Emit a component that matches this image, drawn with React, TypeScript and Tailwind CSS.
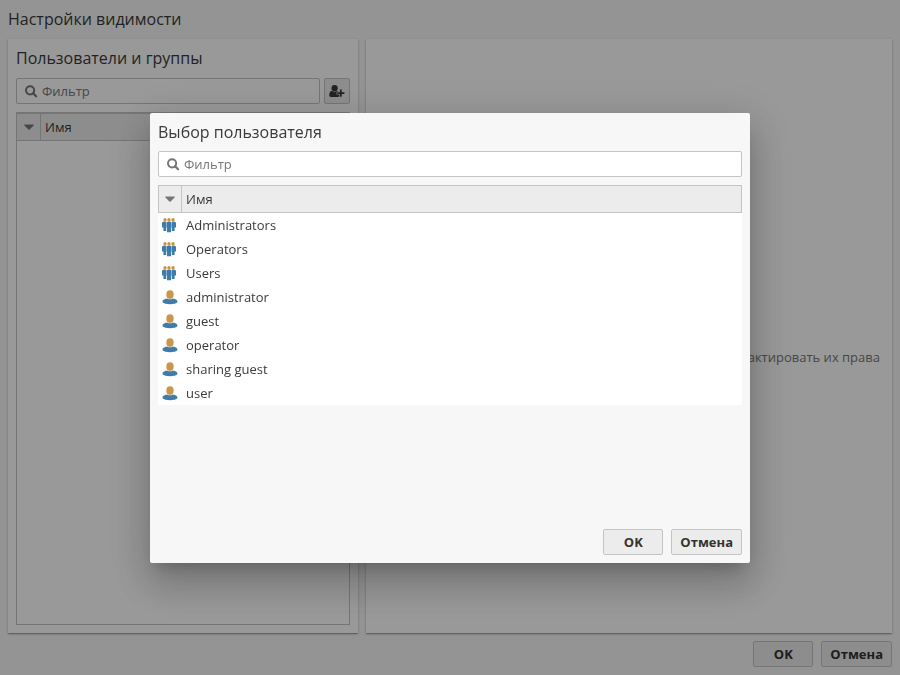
import React from "react";

function SearchIcon() {
  return (
    <svg width="13" height="13" viewBox="0 0 13 13" fill="none" stroke="currentColor" aria-hidden="true">
      <circle cx="5.1" cy="5.3" r="4.1" strokeWidth="2" />
      <path d="M8.2 8.4 L11.1 11.3" strokeWidth="2.2" strokeLinecap="round" />
    </svg>
  );
}

function CaretIcon() {
  return (
    <svg width="10" height="6" viewBox="0 0 10 6" fill="currentColor" aria-hidden="true">
      <path d="M0.9 0.6H9.1C9.8 0.6 10 1.2 9.6 1.6L5.6 5.6C5.3 5.9 4.7 5.9 4.4 5.6L0.4 1.6C0 1.2 0.2 0.6 0.9 0.6Z" />
    </svg>
  );
}

function UserPlusIcon() {
  return (
    <svg width="16" height="13" viewBox="0 0 16 13" fill="currentColor" aria-hidden="true">
      <circle cx="5.6" cy="3.2" r="3.1" />
      <path d="M2.9 5.7C1 5.9 0.3 7.9 0.3 9.9C0.3 11.2 1.1 12 2.4 12H8.9C9.5 12 10 11.8 10.3 11.5V9.4H7.6V6.8H9.3C9 6.2 8.7 5.9 8.2 5.7C6.7 7.1 4.4 7.1 2.9 5.7Z" />
      <path d="M10.9 4.6H12.7V7.2H15.4V9H12.7V11.7H10.9V9H8.3V7.2H10.9Z" />
    </svg>
  );
}

function GroupIcon() {
  return (
    <svg width="16" height="16" viewBox="0 0 16 16" aria-hidden="true">
      <g fill="#c9964b">
        <ellipse cx="3" cy="2.9" rx="1.7" ry="1.8" />
        <ellipse cx="7" cy="2.9" rx="1.7" ry="1.8" />
        <ellipse cx="11" cy="2.9" rx="1.7" ry="1.8" />
      </g>
      <g fill="#3d7cab">
        <path d="M1 4.8H4.2V14H1.4V10.4H0V5.8Z" />
        <path d="M9.8 4.8H13L14 5.8V10.4H12.6V14H9.8Z" />
        <path d="M5.4 4.8H8.6L9.5 5.8V10.8H9V15.3H5V10.8H4.5V5.8Z" />
      </g>
    </svg>
  );
}

function UserIcon() {
  return (
    <svg width="16" height="16" viewBox="0 0 16 16" aria-hidden="true">
      <path fill="#3d7cab" d="M0.5 13.2C0.5 10.4 3 9.8 5.2 9.4C6.7 10.6 9.3 10.6 10.8 9.4C13 9.8 15.5 10.4 15.5 13.2C13.5 15.8 2.5 15.8 0.5 13.2Z" />
      <ellipse fill="#c9964b" cx="8" cy="5.6" rx="3.7" ry="4.3" />
    </svg>
  );
}

function FilterField({ label }: { label: string }) {
  return (
    <label className="flex h-[26px] min-w-0 flex-1 items-center gap-1 rounded-xs border border-[#c4c4c4] bg-white pl-2 text-[#777]">
      <SearchIcon />
      <input
        type="text"
        aria-label={label}
        placeholder="Фильтр"
        className="min-w-0 flex-1 bg-transparent outline-none placeholder:text-[#777]"
      />
    </label>
  );
}

function Button({ children }: { children: React.ReactNode }) {
  return (
    <button type="button" className="h-[26px] min-w-[60px] rounded-xs border border-[#c4c4c4] bg-[#ececec] px-2 font-bold text-[#333]">
      {children}
    </button>
  );
}

function HeadRow({ framed = false }: { framed?: boolean }) {
  return (
    <thead>
      <tr className="h-7 bg-[#ececec]">
        <th className={`w-6 border-y border-r border-[#c4c4c4] p-0 text-[#777] ${framed ? "" : "border-l"}`}>
          <button type="button" aria-label="Сортировка" className="flex w-full justify-center">
            <CaretIcon />
          </button>
        </th>
        <th className={`border-y border-[#c4c4c4] px-1 py-0 text-left font-normal ${framed ? "" : "border-r"}`}>Имя</th>
      </tr>
    </thead>
  );
}

const entries = [
  { name: "Administrators", group: true },
  { name: "Operators", group: true },
  { name: "Users", group: true },
  { name: "administrator", group: false },
  { name: "guest", group: false },
  { name: "operator", group: false },
  { name: "sharing guest", group: false },
  { name: "user", group: false },
];

function UserDialog() {
  return (
    <div className="fixed inset-0 flex items-center justify-center bg-black/40 pt-px">
      <section
        role="dialog"
        aria-modal="true"
        aria-labelledby="dialog-title"
        className="flex h-[450px] w-[600px] flex-col rounded-xs bg-[#f7f7f7] p-2 shadow-[0_11px_15px_-7px_rgba(0,0,0,0.2),0_24px_38px_3px_rgba(0,0,0,0.14),0_9px_46px_8px_rgba(0,0,0,0.12)]"
      >
        <h2 id="dialog-title" className="mb-2 text-base leading-[22px]">Выбор пользователя</h2>
        <div className="mb-2 flex">
          <FilterField label="Фильтр пользователей" />
        </div>
        <div className="min-h-0 flex-1 overflow-hidden">
          <table className="w-full table-fixed border-separate border-spacing-0">
            <HeadRow />
            <tbody className="bg-white">
              {entries.map((entry) => (
                <tr key={entry.name} className="h-6">
                  <td className="p-0">
                    <span className="flex justify-center">{entry.group ? <GroupIcon /> : <UserIcon />}</span>
                  </td>
                  <td className="px-1 py-0">{entry.name}</td>
                </tr>
              ))}
            </tbody>
          </table>
        </div>
        <footer className="flex justify-end gap-2">
          <Button>OK</Button>
          <Button>Отмена</Button>
        </footer>
      </section>
    </div>
  );
}

export default function App() {
  return (
    <div className="flex min-h-screen flex-col bg-[#f7f7f7] p-2 font-['Open_Sans','Noto_Sans',sans-serif] text-[13px] leading-[18px] text-[#3a3a3a]">
      <h1 className="mb-2 text-base leading-[23px]">Настройки видимости</h1>
      <main className="mb-2 flex flex-1 gap-2">
        <section className="flex w-[350px] flex-col bg-white p-2 shadow-[0_1px_3px_rgba(0,0,0,0.2),0_1px_1px_rgba(0,0,0,0.14),0_2px_1px_-1px_rgba(0,0,0,0.12)]">
          <h2 className="mb-2 text-base leading-[23px]">Пользователи и группы</h2>
          <div className="mb-2 flex gap-1">
            <FilterField label="Фильтр групп" />
            <button
              type="button"
              aria-label="Добавить пользователя"
              className="flex size-[26px] items-center justify-center rounded-xs border border-[#c4c4c4] bg-[#ececec]"
            >
              <UserPlusIcon />
            </button>
          </div>
          <div className="flex-1 border border-[#c4c4c4]">
            <table className="w-full table-fixed border-separate border-spacing-0">
              <HeadRow framed />
            </table>
          </div>
        </section>
        <section className="flex flex-1 items-center justify-end bg-white px-3 shadow-[0_1px_3px_rgba(0,0,0,0.2),0_1px_1px_rgba(0,0,0,0.14),0_2px_1px_-1px_rgba(0,0,0,0.12)]">
          <p className="mt-[42px] text-right text-[#777]">редактировать их права</p>
        </section>
      </main>
      <footer className="flex justify-end gap-2">
        <Button>OK</Button>
        <Button>Отмена</Button>
      </footer>
      <UserDialog />
    </div>
  );
}
